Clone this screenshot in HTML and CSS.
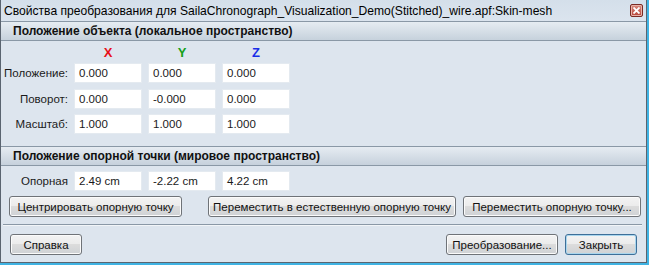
FILE: index.html
```html
<!DOCTYPE html>
<html lang="ru">
<head>
    <meta charset="UTF-8">
    <title>Свойства преобразования</title>
    <link rel="stylesheet" href="styles.css">
</head>
<body>
    <div class="window">
        <div class="frame">
            <div class="titlebar">
                <span class="title">Свойства преобразования для SailaChronograph_Visualization_Demo(Stitched)_wire.apf:Skin-mesh</span>
                <span class="close">
                    <svg width="7" height="7" viewBox="0 0 7 7"><path d="M0.5 0.5 L6.5 6.5 M6.5 0.5 L0.5 6.5" stroke="#fff" stroke-width="1.8"/></svg>
                </span>
            </div>

            <div class="section-head">Положение объекта (локальное пространство)</div>

            <div class="rows">
                <div class="row axes">
                    <span></span>
                    <span class="axis axis-x">X</span>
                    <span class="axis axis-y">Y</span>
                    <span class="axis axis-z">Z</span>
                </div>
                <div class="row">
                    <span class="label">Положение:</span>
                    <div class="field">0.000</div>
                    <div class="field">0.000</div>
                    <div class="field">0.000</div>
                </div>
                <div class="row">
                    <span class="label">Поворот:</span>
                    <div class="field">0.000</div>
                    <div class="field">-0.000</div>
                    <div class="field">0.000</div>
                </div>
                <div class="row">
                    <span class="label">Масштаб:</span>
                    <div class="field">1.000</div>
                    <div class="field">1.000</div>
                    <div class="field">1.000</div>
                </div>
            </div>

            <div class="section-head section-head-2">Положение опорной точки (мировое пространство)</div>

            <div class="rows rows-pivot">
                <div class="row">
                    <span class="label">Опорная</span>
                    <div class="field">2.49 cm</div>
                    <div class="field">-2.22 cm</div>
                    <div class="field">4.22 cm</div>
                </div>
            </div>

            <div class="pivot-buttons">
                <button class="btn btn-center">Центрировать опорную точку</button>
                <button class="btn btn-natural">Переместить в естественную опорную точку</button>
                <button class="btn btn-move">Переместить опорную точку...</button>
            </div>

            <div class="separator"></div>

            <div class="footer">
                <button class="btn btn-help">Справка</button>
                <span class="spacer"></span>
                <button class="btn btn-transform">Преобразование...</button>
                <button class="btn btn-close btn-default">Закрыть</button>
            </div>
        </div>
    </div>
</body>
</html>
```

FILE: styles.css
```css
body {
    margin: 0;
    padding: 0;
    background: #dde5ee;
    font-family: "Liberation Sans", Arial, sans-serif;
    font-size: 11.5px;
    color: #1a1a1a;
    overflow: hidden;
}

.window {
    width: 649px;
    height: 265px;
    box-sizing: border-box;
    border-right: 2px solid #3fb3e3;
    border-bottom: 2px solid #3fb3e3;
    background: #dde5ee;
}

.frame {
    height: 100%;
    box-sizing: border-box;
    border-left: 1px solid #5a6470;
    border-right: 1px solid #5a6470;
    border-bottom: 1px solid #5a6470;
    display: flex;
    flex-direction: column;
}

/* Заголовок окна */
.titlebar {
    height: 21px;
    display: flex;
    align-items: center;
    padding-left: 3px;
    background: linear-gradient(#d4dfea, #dbe4ee);
    border-bottom: 1px solid #8a98a6;
    font-size: 12.1px;
    color: #000;
}

.title {
    flex: 1;
    white-space: nowrap;
}

.close {
    width: 11px;
    height: 11px;
    margin-right: 3px;
    display: flex;
    align-items: center;
    justify-content: center;
    background: linear-gradient(#d88a7e, #b8443a);
    border: 1px solid #7a2b24;
    box-shadow: inset 0 0 0 1px #e8b2a8;
    border-radius: 2px;
}

/* Заголовки разделов */
.section-head {
    height: 18px;
    display: flex;
    align-items: center;
    padding-left: 12px;
    background: linear-gradient(#e6ecf2, #c6d1dc);
    border-bottom: 1px solid #8a98a6;
    font-size: 12px;
    font-weight: bold;
    color: #111;
}

.section-head-2 {
    margin-top: 12px;
    border-top: 1px solid #8a98a6;
}

/* Строки с полями */
.rows {
    display: flex;
    flex-direction: column;
    gap: 5.5px;
}

.row {
    display: grid;
    grid-template-columns: 67px 68px 68px 68px;
    column-gap: 6px;
    align-items: center;
    height: 20px;
}

.axes {
    height: 22px;
    margin-bottom: -5.5px;
}

.axis {
    text-align: center;
    font-weight: bold;
    font-size: 13px;
}

.axis-x { color: #e8101a; }
.axis-y { color: #14a01a; }
.axis-z { color: #1a2ee8; }

.label {
    display: flex;
    justify-content: flex-end;
    white-space: nowrap;
    overflow: hidden;
}

.field {
    height: 20px;
    box-sizing: border-box;
    padding-left: 4px;
    display: flex;
    align-items: center;
    background: #fff;
    border: 1px solid #e4eaf0;
    white-space: nowrap;
}

.rows-pivot {
    margin-top: 5px;
}

/* Кнопки */
.btn {
    height: 21px;
    box-sizing: border-box;
    padding: 0;
    font-family: inherit;
    font-size: 11.5px;
    white-space: nowrap;
    color: #111;
    border: 1px solid #6f7378;
    border-radius: 3px;
    background: linear-gradient(#f3f3f3 0%, #ececec 45%, #dcdcdc 50%, #cfd2d5 100%);
    box-shadow: inset 0 0 0 1px #fbfbfb;
}

.pivot-buttons {
    display: flex;
    margin-top: 5px;
    padding-left: 8px;
}

.btn-center { width: 173px; }
.btn-natural { width: 248px; margin-left: 26px; }
.btn-move { width: 178px; margin-left: 7px; }

.separator {
    margin: 7px 4px 0 2px;
    height: 1px;
    background: #8a98a6;
    border-bottom: 1px solid #f2f5f8;
}

.footer {
    display: flex;
    margin-top: 8px;
    padding: 0 9px;
}

.spacer {
    flex: 1;
}

.btn-help { width: 72px; }
.btn-transform { width: 112px; }
.btn-close { width: 72px; margin-left: 7px; }

.btn-default {
    border-color: #3d6f99;
    box-shadow: inset 0 0 0 1px #a9d6ee;
}
```
